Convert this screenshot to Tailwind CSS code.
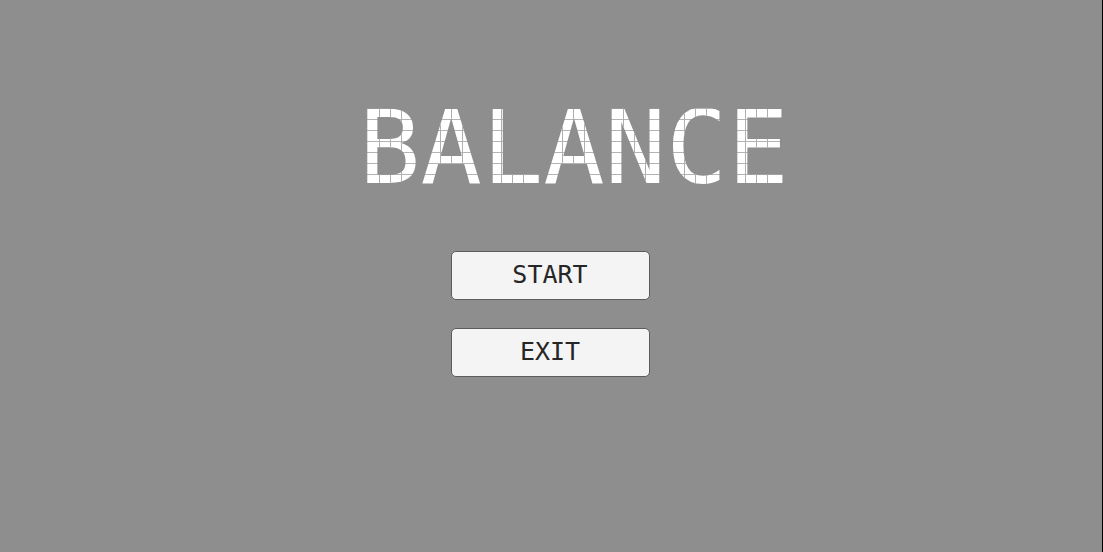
<!DOCTYPE html>
<html lang="en">
<head>
<meta charset="utf-8">
<meta name="viewport" content="width=device-width, initial-scale=1">
<title>Balance</title>
<script src="https://cdn.jsdelivr.net/npm/@tailwindcss/browser@4"></script>
</head>
<body class="min-h-screen bg-[#8e8e8e] border-r border-black font-['DejaVu_Sans_Mono','Liberation_Mono',monospace]">
<main class="flex flex-col items-center pr-0.5 pt-[108px]">
  <!-- Wordmark filled with a grid of square cells -->
  <h1 class="ml-[48px] text-[102px] leading-[80px] text-transparent bg-clip-text bg-[linear-gradient(to_right,transparent_20px,#b0b0b0_20px,#b0b0b0_21px,transparent_21px,transparent_31px,#b0b0b0_31px,#b0b0b0_32px,transparent_32px,transparent_42px,#b0b0b0_42px,#b0b0b0_43px,transparent_43px),linear-gradient(to_bottom,white_10px,#b4b4b4_10px)] bg-size-[61px_11px] bg-position-[0_1px]">BALANCE</h1>
  <nav class="mt-[63px] flex flex-col gap-7" aria-label="Main menu">
    <button type="button" class="h-[49px] w-[199px] rounded-[5px] border border-[#5c5c5c] bg-[#f4f4f4] pb-0.5 text-[25px] leading-[32px] text-[#262626]">START</button>
    <button type="button" class="h-[49px] w-[199px] rounded-[5px] border border-[#5c5c5c] bg-[#f4f4f4] pb-0.5 text-[25px] leading-[32px] text-[#262626]">EXIT</button>
  </nav>
</main>
</body>
</html>
